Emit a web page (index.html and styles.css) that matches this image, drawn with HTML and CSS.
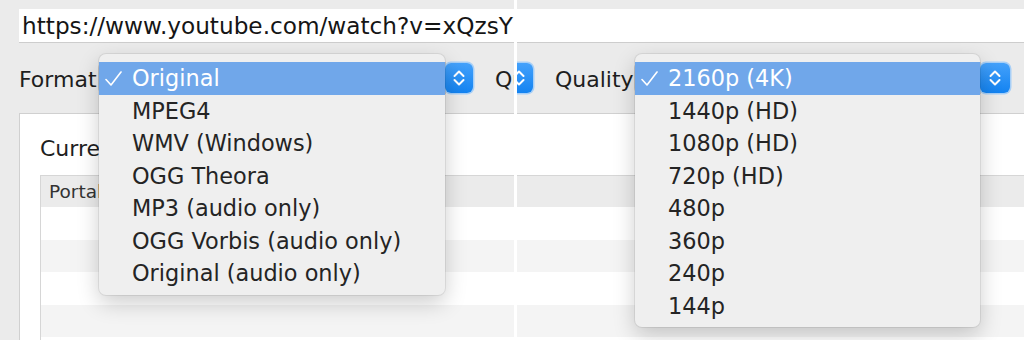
FILE: index.html
```html
<!DOCTYPE html>
<html>
<head>
<meta charset="utf-8">
<title>Downloader</title>
<link rel="stylesheet" href="styles.css">
</head>
<body>
<div class="stage">
  <div class="pane pane-left">
    <div class="window">
      <div class="urlbar"><div class="url">https://www.youtube.com/watch?v=xQzsY</div></div>
      <div class="controls">
        <span class="label">Format</span>
        <div class="select select-format">
          <span class="value"></span>
          <span class="stepper"><svg viewBox="0 0 28 30" width="28" height="30"><path d="M9.5 13 L14 8.5 L18.5 13 M9.5 17 L14 21.5 L18.5 17" fill="none" stroke="#fff" stroke-width="2" stroke-linecap="round" stroke-linejoin="round"/></svg></span>
          <ul class="menu menu-format">
            <li class="selected"><span class="check"><svg viewBox="0 0 17 15" width="17" height="15"><path d="M1 8.5 L6 14 L16 1" fill="none" stroke="#fff" stroke-width="1.6" stroke-linecap="round" stroke-linejoin="round"/></svg></span>Original</li>
            <li><span class="check"></span>MPEG4</li>
            <li><span class="check"></span>WMV (Windows)</li>
            <li><span class="check"></span>OGG Theora</li>
            <li><span class="check"></span>MP3 (audio only)</li>
            <li><span class="check"></span>OGG Vorbis (audio only)</li>
            <li><span class="check"></span>Original (audio only)</li>
          </ul>
        </div>
        <span class="label label-quality">Quality</span>
        <div class="select select-quality">
          <span class="value"></span>
          <span class="stepper"><svg viewBox="0 0 30 30" width="30" height="30"><path d="M10.5 13 L15 8.5 L19.5 13 M10.5 17 L15 21.5 L19.5 17" fill="none" stroke="#fff" stroke-width="2" stroke-linecap="round" stroke-linejoin="round"/></svg></span>
        </div>
      </div>
      <div class="group">
        <div class="group-title">Current Downloads</div>
        <div class="table">
          <div class="thead">Portal</div>
          <div class="row"></div>
          <div class="row alt"></div>
          <div class="row"></div>
          <div class="row alt"></div>
          <div class="row"></div>
        </div>
      </div>
    </div>
  </div>
  <div class="divider"></div>
  <div class="pane pane-right">
    <div class="window">
      <div class="urlbar"><div class="url"></div></div>
      <div class="controls">
        <span class="label">Format</span>
        <div class="select select-format">
          <span class="value"></span>
          <span class="stepper"><svg viewBox="0 0 28 30" width="28" height="30"><path d="M9.5 13 L14 8.5 L18.5 13 M9.5 17 L14 21.5 L18.5 17" fill="none" stroke="#fff" stroke-width="2" stroke-linecap="round" stroke-linejoin="round"/></svg></span>
        </div>
        <span class="label label-quality">Quality</span>
        <div class="select select-quality">
          <span class="value"></span>
          <span class="stepper"><svg viewBox="0 0 30 30" width="30" height="30"><path d="M10.5 13 L15 8.5 L19.5 13 M10.5 17 L15 21.5 L19.5 17" fill="none" stroke="#fff" stroke-width="2" stroke-linecap="round" stroke-linejoin="round"/></svg></span>
          <ul class="menu menu-quality">
            <li class="selected"><span class="check"><svg viewBox="0 0 17 15" width="17" height="15"><path d="M1 8.5 L6 14 L16 1" fill="none" stroke="#fff" stroke-width="1.6" stroke-linecap="round" stroke-linejoin="round"/></svg></span>2160p (4K)</li>
            <li><span class="check"></span>1440p (HD)</li>
            <li><span class="check"></span>1080p (HD)</li>
            <li><span class="check"></span>720p (HD)</li>
            <li><span class="check"></span>480p</li>
            <li><span class="check"></span>360p</li>
            <li><span class="check"></span>240p</li>
            <li><span class="check"></span>144p</li>
          </ul>
        </div>
      </div>
      <div class="group">
        <div class="group-title"></div>
        <div class="table">
          <div class="thead"></div>
          <div class="row"></div>
          <div class="row alt"></div>
          <div class="row"></div>
          <div class="row alt"></div>
          <div class="row"></div>
        </div>
      </div>
    </div>
  </div>
</div>
</body>
</html>
```

FILE: styles.css
```css
* { box-sizing: border-box; margin: 0; padding: 0; }
html, body { width: 1024px; height: 340px; overflow: hidden; }
body {
  background: #ebebeb;
  font-family: "DejaVu Sans", Verdana, sans-serif;
  color: #222;
}
.stage { display: flex; width: 1024px; height: 340px; }
.pane { position: relative; overflow: hidden; height: 340px; }
.pane-left { width: 514px; flex: none; }
.divider { width: 3px; flex: none; background: #fff; }
.pane-right { flex: 1; }
.window { width: 1100px; height: 340px; background: #ebebeb; }
.pane-right .window { margin-left: -457px; }

.urlbar { padding: 9px 0 0 19px; }
.url {
  height: 34px;
  background: #fff;
  border-bottom: 1px solid #cdcdcd;
  font-size: 23.2px;
  line-height: 34px;
  padding-left: 3px;
  color: #151515;
  white-space: nowrap;
}

.controls {
  display: flex;
  align-items: flex-start;
  height: 70px;
  padding: 20px 0 0 19px;
}
.label {
  width: 80px;
  flex: none;
  height: 30px;
  padding-top: 2px;
  font-size: 22px;
  line-height: 30px;
  white-space: nowrap;
  color: #1e1e1e;
}
.label-quality { margin-left: 22px; }
.select { position: relative; display: flex; height: 30px; flex: none; }
.select-format { width: 374px; }
.select-quality { width: 375px; }
.select .value {
  flex: 1;
  background: #fff;
  border-radius: 5px 0 0 5px;
  box-shadow: 0 0 0 1px rgba(0,0,0,.12);
}
.stepper {
  flex: none;
  width: 28px;
  height: 30px;
  border-radius: 6px;
  background: linear-gradient(#44a1fb, #1383f1);
  box-shadow: 0 0 0 1.5px rgba(150,200,250,.8);
  display: flex;
}
.select-quality .stepper { width: 30px; }
.stepper svg { display: block; }

.menu {
  position: absolute;
  left: 0;
  top: -9px;
  z-index: 2;
  list-style: none;
  background: #efefef;
  border-radius: 7px;
  padding: 8px 0 5px;
  box-shadow: 0 0 0 1px rgba(0,0,0,.07), 0 8px 22px rgba(0,0,0,.2);
}
.menu-format { width: 346px; }
.menu-quality { width: 345px; }
.menu li {
  display: flex;
  height: 32.5px;
  line-height: 33px;
  font-size: 22.4px;
  color: #242424;
  white-space: nowrap;
}
.menu li.selected { background: #70a7ea; color: #fff; }
.menu .check {
  width: 33px;
  flex: none;
  padding-left: 6px;
  display: flex;
  align-items: center;
}
.menu .check svg { display: block; }

.group {
  margin-left: 19px;
  height: 240px;
  background: #fff;
  border-top: 1px solid #d0d0d0;
  border-left: 1px solid #d0d0d0;
}
.group-title {
  height: 61px;
  padding: 21px 0 0 20px;
  font-size: 22px;
  line-height: 28px;
  color: #1e1e1e;
  white-space: nowrap;
}
.table {
  margin-left: 20px;
  border-top: 1px solid #d6d6d6;
  border-left: 1px solid #d6d6d6;
}
.thead {
  height: 31px;
  background: #ebebeb;
  font-size: 18.5px;
  line-height: 31px;
  padding-left: 8px;
  color: #333;
}
.row { height: 32.5px; background: #fff; }
.row.alt { background: #f4f4f4; }
```
